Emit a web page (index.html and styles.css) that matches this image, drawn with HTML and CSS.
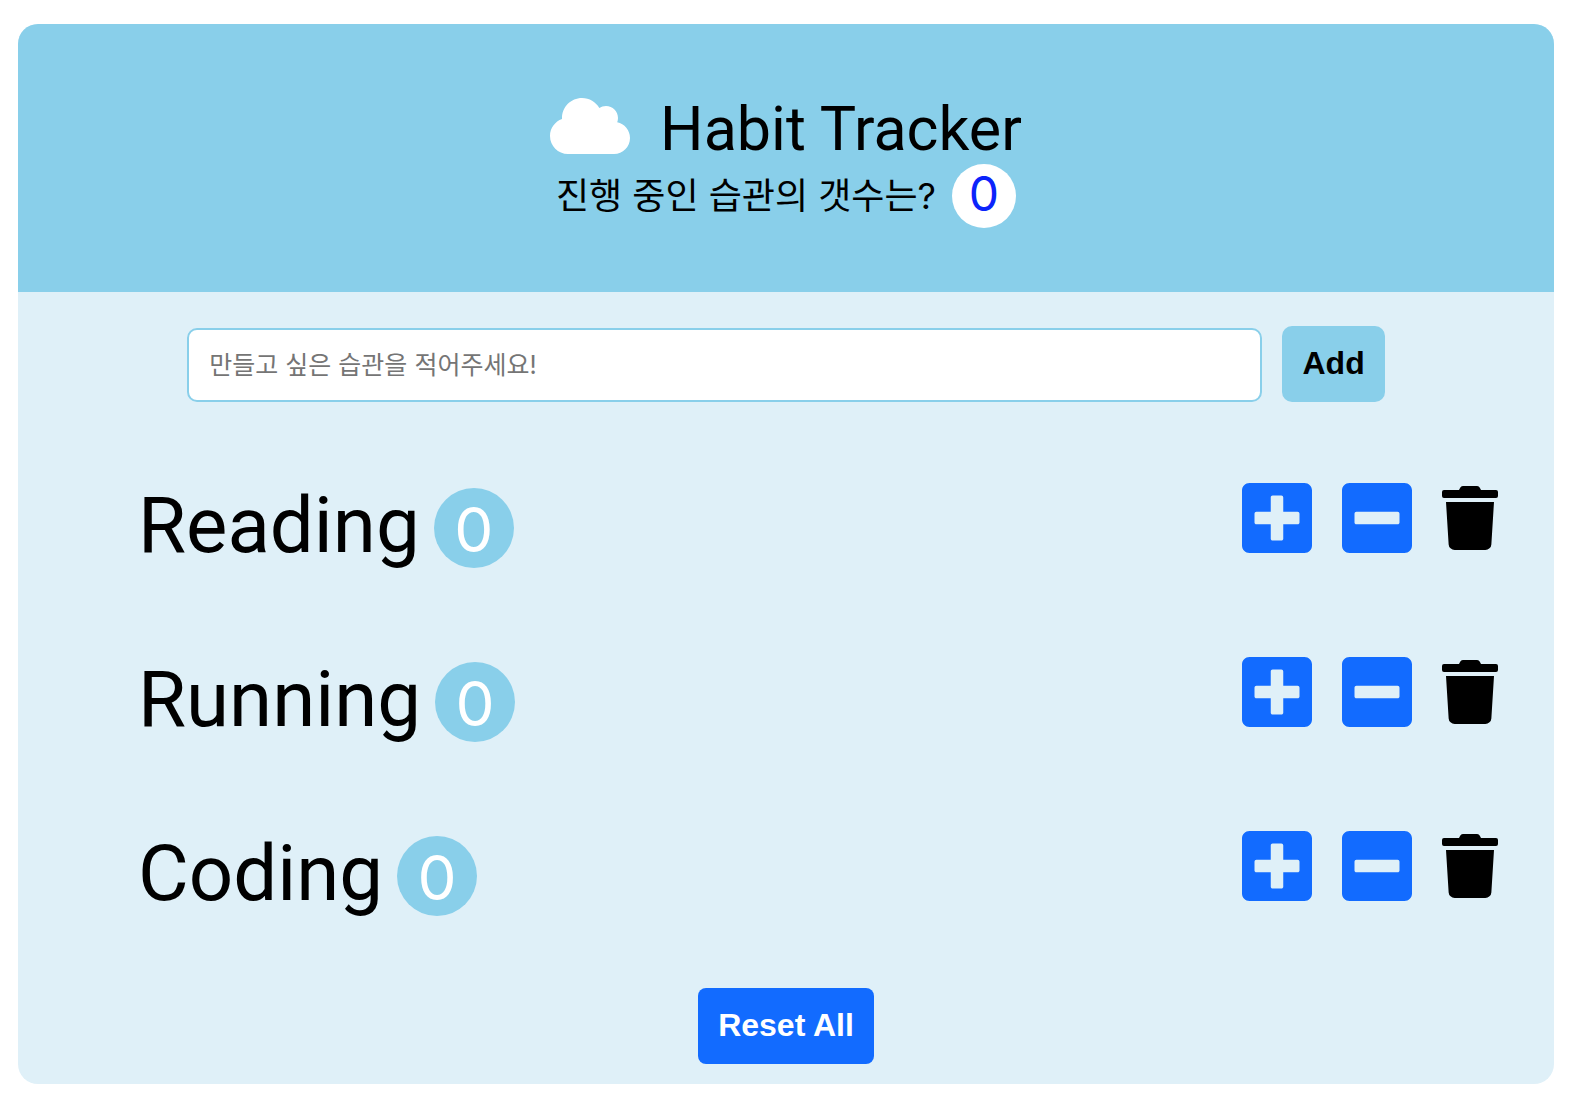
FILE: index.html
```html
<!DOCTYPE html>
<html lang="ko">
<head>
  <meta charset="utf-8">
  <meta name="viewport" content="width=device-width, initial-scale=1">
  <title>Habit Tracker</title>
  <link rel="stylesheet" href="styles.css">
</head>
<body>
  <svg class="sprite" aria-hidden="true">
    <symbol id="plus" viewBox="0 0 448 512"><path d="M400 32H48C21.5 32 0 53.5 0 80v352c0 26.5 21.5 48 48 48h352c26.5 0 48-21.5 48-48V80c0-26.5-21.5-48-48-48zm-32 252c0 6.6-5.4 12-12 12h-92v92c0 6.6-5.4 12-12 12h-56c-6.6 0-12-5.4-12-12v-92H92c-6.6 0-12-5.4-12-12v-56c0-6.6 5.4-12 12-12h92v-92c0-6.6 5.4-12 12-12h56c6.6 0 12 5.4 12 12v92h92c6.6 0 12 5.4 12 12v56z"/></symbol>
    <symbol id="minus" viewBox="0 0 448 512"><path d="M400 32H48C21.5 32 0 53.5 0 80v352c0 26.5 21.5 48 48 48h352c26.5 0 48-21.5 48-48V80c0-26.5-21.5-48-48-48zM92 296c-6.6 0-12-5.4-12-12v-56c0-6.6 5.4-12 12-12h264c6.6 0 12 5.4 12 12v56c0 6.6-5.4 12-12 12H92z"/></symbol>
    <symbol id="trash" viewBox="0 0 448 512"><path d="M432 32H312l-9.4-18.7A24 24 0 0 0 281.1 0H166.8a23.72 23.72 0 0 0-21.4 13.3L136 32H16A16 16 0 0 0 0 48v32a16 16 0 0 0 16 16h416a16 16 0 0 0 16-16V48a16 16 0 0 0-16-16zM53.2 467a48 48 0 0 0 47.9 45h245.8a48 48 0 0 0 47.9-45L416 128H32z"/></symbol>
  </svg>
  <main class="card">
    <header class="header">
      <h1 class="title">
        <svg class="cloud" viewBox="0 0 640 512" aria-hidden="true"><path d="M537.6 226.6c4.1-10.7 6.4-22.4 6.4-34.6 0-53-43-96-96-96-19.7 0-38.1 6-53.3 16.2C367 64.2 315.3 32 256 32c-88.4 0-160 71.6-160 160 0 2.7.1 5.4.2 8.1C40.2 219.8 0 273.2 0 336c0 79.5 64.5 144 144 144h368c70.7 0 128-57.3 128-128 0-61.9-44-113.6-102.4-125.4z"/></svg>
        <span class="title-text">Habit Tracker</span>
      </h1>
      <p class="summary">진행 중인 습관의 갯수는? <span class="total">0</span></p>
    </header>

    <form class="add-form">
      <input class="add-input" type="text" placeholder="만들고 싶은 습관을 적어주세요!" aria-label="만들고 싶은 습관">
      <button class="button button-add" type="button">Add</button>
    </form>

    <ul class="habits">
      <li class="habit">
        <div class="habit-label"><span>Reading</span><span class="count">0</span></div>
        <div class="actions">
          <button class="action" type="button" aria-label="Increase Reading"><svg class="icon"><use href="#plus"/></svg></button>
          <button class="action" type="button" aria-label="Decrease Reading"><svg class="icon"><use href="#minus"/></svg></button>
          <button class="action action-delete" type="button" aria-label="Delete Reading"><svg class="icon icon-trash"><use href="#trash"/></svg></button>
        </div>
      </li>
      <li class="habit">
        <div class="habit-label"><span>Running</span><span class="count">0</span></div>
        <div class="actions">
          <button class="action" type="button" aria-label="Increase Running"><svg class="icon"><use href="#plus"/></svg></button>
          <button class="action" type="button" aria-label="Decrease Running"><svg class="icon"><use href="#minus"/></svg></button>
          <button class="action action-delete" type="button" aria-label="Delete Running"><svg class="icon icon-trash"><use href="#trash"/></svg></button>
        </div>
      </li>
      <li class="habit">
        <div class="habit-label"><span>Coding</span><span class="count">0</span></div>
        <div class="actions">
          <button class="action" type="button" aria-label="Increase Coding"><svg class="icon"><use href="#plus"/></svg></button>
          <button class="action" type="button" aria-label="Decrease Coding"><svg class="icon"><use href="#minus"/></svg></button>
          <button class="action action-delete" type="button" aria-label="Delete Coding"><svg class="icon icon-trash"><use href="#trash"/></svg></button>
        </div>
      </li>
    </ul>

    <footer class="footer">
      <button class="button button-reset" type="button">Reset All</button>
    </footer>
  </main>
</body>
</html>
```
FILE: styles.css
```css
* {
  box-sizing: border-box;
}

body {
  margin: 24px 22px 24px 18px;
  background: #fff;
  color: #000;
  font-family: Inter, "Noto Sans CJK KR", sans-serif;
}

.sprite {
  display: none;
}

.card {
  overflow: hidden;
  border-radius: 20px;
  background: #dff0f8;
}

.header {
  padding: 64px 20px;
  background: #89cfea;
}

.title {
  display: flex;
  align-items: center;
  justify-content: center;
  gap: 30px;
  margin: 0;
  font-family: Roboto, sans-serif;
  font-size: 61px;
  font-weight: 400;
  line-height: 70px;
}

.title-text {
  padding-top: 6px;
}

.cloud {
  width: 80px;
  height: 64px;
  fill: #fff;
}

.summary {
  display: flex;
  align-items: center;
  justify-content: center;
  gap: 16px;
  margin: 0;
  font-size: 36px;
  line-height: 64px;
}

.total {
  width: 64px;
  height: 64px;
  border-radius: 50%;
  background: #fff;
  color: #0b24fb;
  font-size: 48px;
  line-height: 60px;
  text-align: center;
}

.add-form {
  display: flex;
  align-items: flex-end;
  justify-content: center;
  gap: 20px;
  padding: 34px 0;
}

.add-input {
  width: 70%;
  height: 74px;
  padding: 0 20px;
  border: 2px solid #89cfea;
  border-radius: 10px;
  background: #fff;
  font-family: inherit;
  font-size: 25px;
}

.add-input::placeholder {
  color: #757575;
}

.button {
  height: 76px;
  padding: 0 20px 2px;
  border: 0;
  font-family: "Liberation Sans", Arial, sans-serif;
  font-size: 32px;
  font-weight: 700;
}

.button-add {
  border-radius: 10px;
  background: #89cfea;
  color: #000;
}

.button-reset {
  border-radius: 8px;
  background: #126bff;
  color: #fff;
}

.habits {
  margin: 0;
  padding: 0;
  list-style: none;
}

.habit {
  display: flex;
  justify-content: space-between;
  min-height: 174px;
  padding: 42px 56px 42px 120px;
}

.habit-label {
  display: flex;
  align-items: baseline;
  align-self: flex-end;
  gap: 14px;
  font-family: Roboto, sans-serif;
  font-size: 78px;
  line-height: 84px;
}

.count {
  width: 80px;
  height: 80px;
  border-radius: 50%;
  background: #89cfea;
  color: #fff;
  font-family: Inter, sans-serif;
  font-size: 62px;
  text-align: center;
}

.actions {
  display: flex;
  align-items: center;
  align-self: flex-start;
  gap: 30px;
}

.action {
  display: flex;
  padding: 0;
  border: 0;
  background: none;
  color: #126bff;
}

.action-delete {
  color: #000;
}

.icon {
  width: 70px;
  height: 80px;
  fill: currentColor;
}

.icon-trash {
  width: 56px;
  height: 64px;
}

.footer {
  display: flex;
  justify-content: center;
  padding: 30px 20px 20px;
}
```
